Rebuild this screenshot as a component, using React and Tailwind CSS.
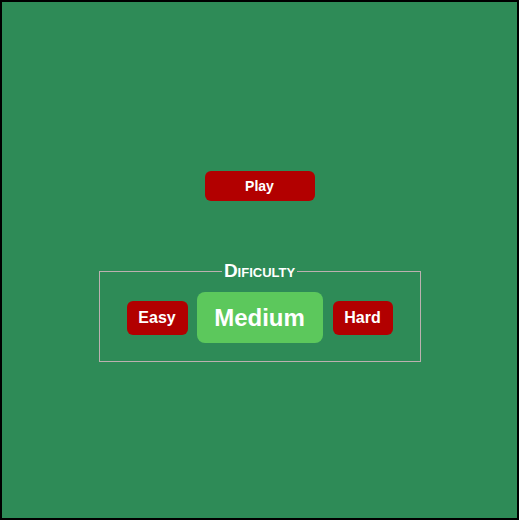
import React from "react";

export default function App() {
  const [level, setLevel] = React.useState("Medium");

  const levels = [
    { name: "Easy", size: "w-[61px] h-[34px] text-base mr-[9px]" },
    { name: "Medium", size: "w-[126px] h-[51px] text-2xl" },
    { name: "Hard", size: "w-[60px] h-[34px] text-base ml-[10px]" },
  ];

  return (
    <div className="h-[520px] w-full border-2 border-black bg-[#2e8b57] font-['Liberation_Sans',Arial,sans-serif] flex flex-col items-center pt-[169px]">
      {/* play */}
      <button
        type="button"
        className="w-[110px] h-[30px] rounded-md bg-[#b20000] text-white text-sm font-bold"
      >
        Play
      </button>

      <fieldset className="mt-[60px] w-[322px] border border-[#bcb0b0] pt-[11px] pb-[18px]">
        <legend className="mx-auto px-0.5 text-white font-bold text-[19px] leading-[20px] [font-variant:small-caps]">
          Dificulty
        </legend>
        <div className="flex items-center justify-center">
          {levels.map((l) => (
            <button
              key={l.name}
              type="button"
              onClick={() => setLevel(l.name)}
              className={`${l.size} font-bold text-white ${
                level === l.name ? "bg-[#5cc85c] rounded-lg" : "bg-[#b20000] rounded-md"
              }`}
            >
              {l.name}
            </button>
          ))}
        </div>
      </fieldset>
    </div>
  );
}
